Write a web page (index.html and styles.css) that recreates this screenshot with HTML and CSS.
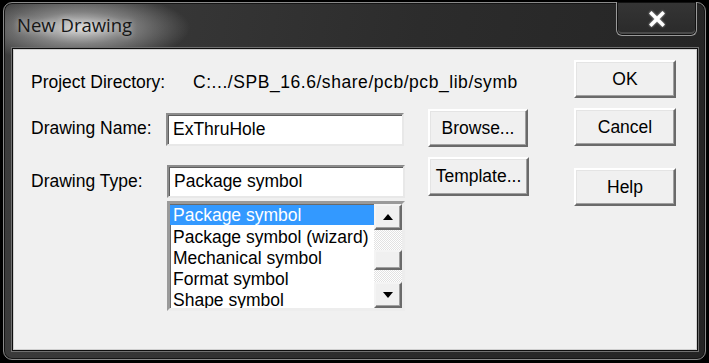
FILE: index.html
```html
<!DOCTYPE html>
<html lang="en">
<head>
    <meta charset="UTF-8">
    <title>New Drawing</title>
    <link rel="stylesheet" href="styles.css">
</head>
<body>
    <div class="window">
        <div class="titlebar">
            <span class="title">New Drawing</span>
            <div class="close">
                <svg width="18" height="16" viewBox="0 0 18 16">
                    <path d="M3.5 2.5 L14.5 13.5 M14.5 2.5 L3.5 13.5" stroke="#fff" stroke-width="3.4" stroke-linecap="square"/>
                </svg>
            </div>
        </div>

        <div class="client">
            <div class="main">
                <div class="row row-dir">
                    <span class="label label-dir">Project Directory:</span>
                    <span class="value">C:.../SPB_16.6/share/pcb/pcb_lib/symb</span>
                </div>

                <div class="row row-name">
                    <span class="label label-name">Drawing Name:</span>
                    <div class="textbox name-box">ExThruHole</div>
                    <div class="btn btn-side">Browse...</div>
                </div>

                <div class="row row-type">
                    <span class="label label-type">Drawing Type:</span>
                    <div class="field-stack">
                        <div class="textbox type-box">Package symbol</div>
                        <div class="listbox">
                            <div class="items">
                                <div class="item selected">Package symbol</div>
                                <div class="item">Package symbol (wizard)</div>
                                <div class="item">Mechanical symbol</div>
                                <div class="item">Format symbol</div>
                                <div class="item">Shape symbol</div>
                            </div>
                            <div class="scrollbar">
                                <div class="sb-btn">
                                    <svg width="10" height="6" viewBox="0 0 10 6"><polygon points="5,0 10,6 0,6" fill="#000"/></svg>
                                </div>
                                <div class="sb-track">
                                    <div class="sb-thumb"></div>
                                </div>
                                <div class="sb-btn">
                                    <svg width="10" height="6" viewBox="0 0 10 6"><polygon points="0,0 10,0 5,6" fill="#000"/></svg>
                                </div>
                            </div>
                        </div>
                    </div>
                    <div class="btn btn-side btn-template">Template...</div>
                </div>
            </div>

            <div class="actions">
                <div class="btn btn-ok">OK</div>
                <div class="btn btn-cancel">Cancel</div>
                <div class="btn btn-help">Help</div>
            </div>
        </div>
    </div>
</body>
</html>
```

FILE: styles.css
```css
* {
    margin: 0;
    padding: 0;
    box-sizing: border-box;
}

body {
    background: #000;
    width: 709px;
    height: 363px;
    overflow: hidden;
    font-family: 'Liberation Sans', Arial, sans-serif;
}

.window {
    margin: 2px 3px 0 3px;
    width: 703px;
    height: 358px;
    border: 1px solid #8a8a8a;
    border-radius: 9px;
    background:
        radial-gradient(ellipse 110px 36px at 76px 25px, rgba(225, 225, 225, 0.95) 0%, rgba(175, 175, 175, 0.6) 45%, rgba(60, 60, 60, 0) 100%),
        linear-gradient(100deg, #3d3d3d 0%, #2c2c2c 55%, #242424 100%);
    box-shadow: inset 0 0 0 1px #141414;
}

/* title bar */

.titlebar {
    height: 46px;
    display: flex;
    align-items: flex-start;
}

.title {
    font-family: 'Open Sans', 'Noto Sans', sans-serif;
    font-size: 18.5px;
    color: #161616;
    margin: 9px 0 0 13px;
    line-height: 26px;
    text-shadow: 0 0 6px rgba(255, 255, 255, 0.6);
}

.close {
    margin-left: auto;
    margin-right: 8px;
    margin-top: -1px;
    width: 81px;
    height: 34px;
    border: 1px solid #9a9a9a;
    border-top: none;
    border-radius: 0 0 6px 6px;
    background: linear-gradient(#353535, #2a2a2a);
    box-shadow: inset 0 0 0 1px #121212, inset 0 -2px 0 1px #4a4a4a;
    display: flex;
    align-items: center;
    justify-content: center;
}

.close svg {
    filter: drop-shadow(0 0 1px rgba(255, 255, 255, 0.7));
}

/* client area */

.client {
    margin: 0 8px 0 9px;
    height: 301px;
    background: #f0f0f0;
    border: 1px solid #cfcfcf;
    box-shadow: 0 0 0 1px #0e0e0e, 0 0 0 2px #707070;
    display: flex;
    font-size: 17.5px;
    color: #000;
}

.main {
    width: 560px;
    padding: 22px 0 0 17px;
}

.row {
    display: flex;
    align-items: flex-start;
}

.label {
    white-space: nowrap;
}

.row-dir {
    line-height: 20px;
}

.label-dir {
    width: 162px;
}

.value {
    letter-spacing: 0.55px;
    white-space: nowrap;
}

.row-name {
    margin-top: 17px;
}

.label-name {
    width: 135px;
    line-height: 38px;
}

.row-type {
    margin-top: 10px;
}

.label-type {
    width: 136px;
    margin-top: 8px;
    line-height: 33px;
}

.textbox {
    width: 238px;
    height: 33px;
    background: #fff;
    border: 2px solid;
    border-color: #8c8c8c #e8e8e8 #e8e8e8 #8c8c8c;
    box-shadow: inset 1px 1px 0 #5e5e5e;
    padding-left: 5px;
    line-height: 29px;
    white-space: nowrap;
}

.name-box {
    margin-top: 4px;
}

.type-box {
    margin-top: 8px;
}

.field-stack {
    width: 238px;
}

.listbox {
    margin-top: 3px;
    height: 110px;
    background: #fff;
    border: 3px solid;
    border-color: #9a9a9a #ededed #ededed #9a9a9a;
    box-shadow: inset 1px 1px 0 #6a6a6a;
    display: flex;
}

.items {
    flex: 1;
    overflow: hidden;
    padding-top: 1px;
}

.item {
    height: 21px;
    line-height: 21px;
    padding-left: 3px;
    white-space: nowrap;
}

.item.selected {
    height: 20px;
    line-height: 20px;
    margin-bottom: 2px;
    background: #3399ff;
    color: #fff;
}

.scrollbar {
    width: 28px;
    display: flex;
    flex-direction: column;
}

.sb-btn {
    height: 26px;
    background: #f0f0f0;
    border: 2px solid;
    border-color: #f4f4f4 #6a6a6a #6a6a6a #f4f4f4;
    box-shadow: inset -1px -1px 0 #a0a0a0;
    display: flex;
    align-items: center;
    justify-content: center;
}

.sb-track {
    flex: 1;
    background: repeating-conic-gradient(#ffffff 0 25%, #e2e2e2 0 50%) 0 0 / 2px 2px;
    padding-top: 20px;
}

.sb-thumb {
    height: 20px;
    background: #f0f0f0;
    border: 2px solid;
    border-color: #f4f4f4 #6a6a6a #6a6a6a #f4f4f4;
    box-shadow: inset -1px -1px 0 #a0a0a0;
}

/* buttons */

.btn {
    background: #f0f0f0;
    border: 2px solid;
    border-color: #ffffff #6a6a6a #6a6a6a #ffffff;
    box-shadow: inset -1px -1px 0 #a0a0a0, inset 1px 1px 0 #e4e4e4;
    text-align: center;
    height: 38px;
    line-height: 34px;
    white-space: nowrap;
}

.btn-side {
    width: 100px;
    margin-left: 24px;
}

.btn-template {
    width: 101px;
    margin-left: 23px;
    height: 39px;
    line-height: 35px;
}

.actions {
    width: 102px;
    padding-top: 10px;
    display: flex;
    flex-direction: column;
}

.btn-cancel {
    margin-top: 10px;
}

.btn-help {
    margin-top: 22px;
}
```
